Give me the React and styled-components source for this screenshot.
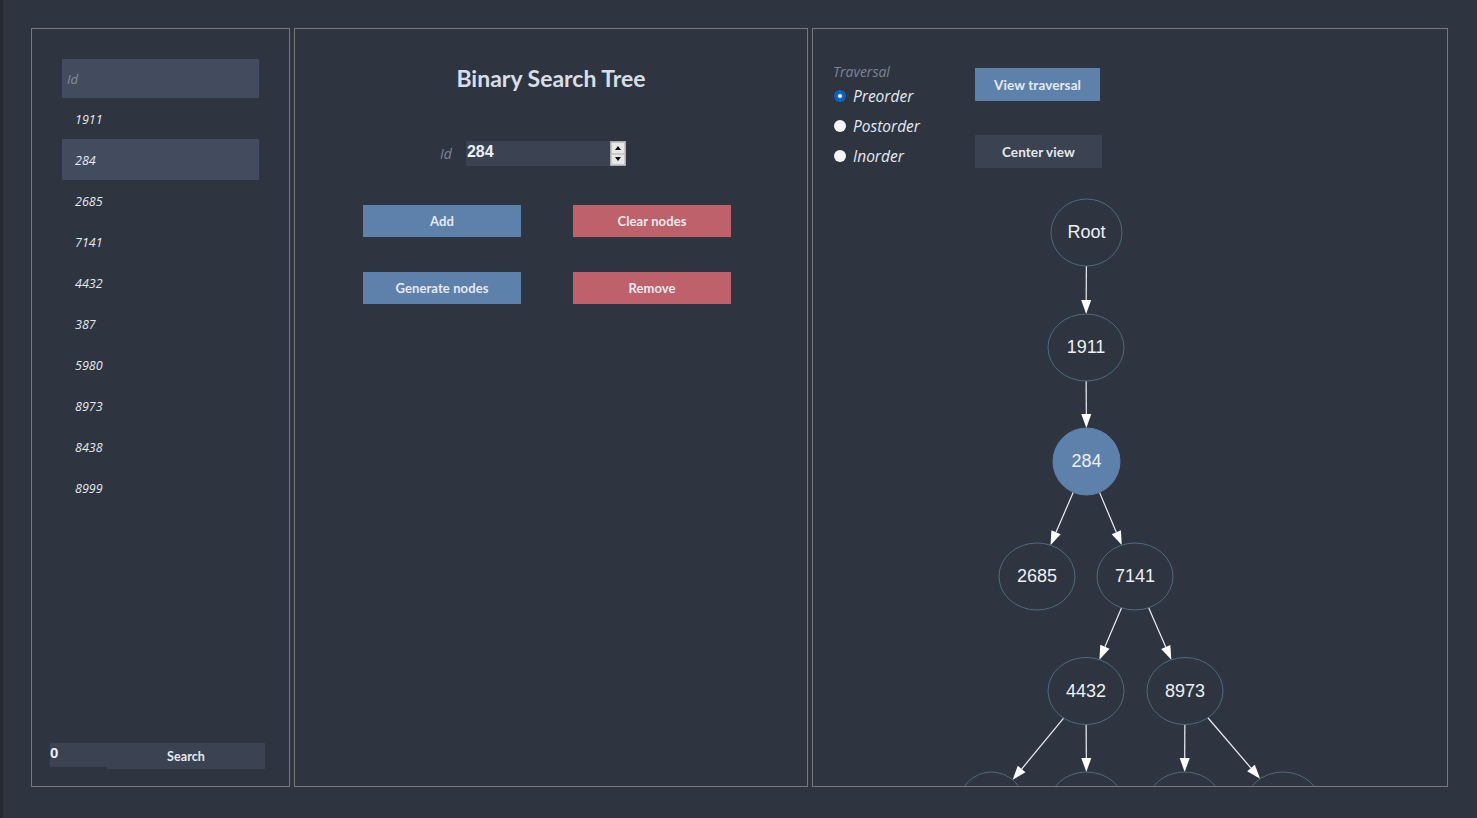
import React from 'react';
import styled, { createGlobalStyle } from 'styled-components';

const GlobalStyle = createGlobalStyle`
  html, body {
    margin: 0;
    padding: 0;
    background: #2e3440;
  }
  * {
    box-sizing: border-box;
  }
`;

const Page = styled.div`
  display: flex;
  gap: 4px;
  height: 100vh;
  padding: 28px 0 0 28px;
  background: #2e3440;
  border-left: 3px solid #262a32;
  font-family: 'Lato', 'Open Sans', sans-serif;
`;

const Panel = styled.section`
  position: relative;
  display: flex;
  flex-direction: column;
  width: ${(p) => p.$w}px;
  height: 759px;
  border: 1px solid #76787b;
  overflow: hidden;
`;

/* ---------- left: node list ---------- */

const ListPanel = styled(Panel)`
  padding: 30px 0 17px 0;
`;

const FilterInput = styled.input`
  margin: 0 30px;
  height: 39px;
  border: none;
  outline: none;
  background: #434c5e;
  padding: 0 5px;
  color: #e5e9f0;
  font: italic 13px 'Open Sans', sans-serif;
  &::placeholder {
    color: #858d9c;
  }
`;

const NodeList = styled.ul`
  list-style: none;
  margin: 0 30px;
  padding: 0;
`;

const NodeItem = styled.li`
  display: flex;
  align-items: center;
  height: 41px;
  padding: 1px 0 0 13px;
  background: ${(p) => (p.$active ? '#434c5e' : 'transparent')};
  color: #e5e9f0;
  font: italic 12.5px 'Open Sans', sans-serif;
`;

const SearchRow = styled.div`
  display: flex;
  align-items: flex-start;
  margin-top: auto;
  margin-left: 18px;
`;

const CountInput = styled.input`
  width: 57px;
  height: 24px;
  border: none;
  outline: none;
  padding: 0 0 6px;
  background: #3b4252;
  color: #eceff4;
  font: bold 15px 'Liberation Sans', Arial, sans-serif;
  line-height: 18px;
`;

const Button = styled.button`
  width: ${(p) => p.$w || 158}px;
  height: ${(p) => p.$h || 32}px;
  border: none;
  padding: 0;
  background: ${(p) =>
    p.$tone === 'blue' ? '#5e81ac' : p.$tone === 'red' ? '#bf616a' : '#3b4252'};
  color: #e5e9f0;
  font: 700 ${(p) => p.$fs || 13}px 'Lato', 'Open Sans', sans-serif;
  letter-spacing: 0.1px;
  cursor: pointer;
`;

/* ---------- middle: editor ---------- */

const EditorPanel = styled(Panel)``;

const Title = styled.h1`
  margin: 37px 0 0;
  text-align: center;
  font: 700 23px/24px 'Lato', 'Open Sans', sans-serif;
  color: #d8dee9;
`;

const IdRow = styled.div`
  display: flex;
  align-items: center;
  gap: 14px;
  margin-top: 51px;
  padding-left: 145px;
`;

const IdLabel = styled.span`
  color: #7d8596;
  font: italic 14px 'Open Sans', sans-serif;
`;

const NumberField = styled.div`
  display: flex;
  height: 25px;
`;

const NumberInput = styled.input`
  width: 144px;
  height: 25px;
  border: none;
  outline: none;
  background: #3b4252;
  color: #eceff4;
  padding: 0 1px 4px;
  font: bold 16px 'Liberation Sans', Arial, sans-serif;
`;

const Spinner = styled.div`
  display: flex;
  flex-direction: column;
  width: 16px;
  height: 25px;
  border: 1px solid #a9a9a9;
  background: #f0f0f0;
`;

const SpinHalf = styled.div`
  flex: 1;
  display: flex;
  align-items: center;
  justify-content: center;
  border: 1px solid #c9c9c9;
  background: #e8e8e8;
  &::after {
    content: '';
    border-left: 3.5px solid transparent;
    border-right: 3.5px solid transparent;
    ${(p) => (p.$up ? 'border-bottom: 4px solid #111;' : 'border-top: 4px solid #111;')}
  }
`;

const ButtonGrid = styled.div`
  display: grid;
  grid-template-columns: 158px 158px;
  column-gap: 52px;
  row-gap: 35px;
  margin-top: 39px;
  padding-left: 68px;
`;

/* ---------- right: traversal + graph ---------- */

const GraphPanel = styled(Panel)``;

const Controls = styled.div`
  position: relative;
  z-index: 1;
  display: flex;
  padding-left: 20px;
`;

const TraversalGroup = styled.div`
  display: flex;
  flex-direction: column;
  width: 142px;
  padding-top: 35px;
`;

const GroupLabel = styled.div`
  height: 17px;
  color: #7d8596;
  font: italic 14px/16px 'Open Sans', sans-serif;
`;

const RadioRow = styled.label`
  display: flex;
  align-items: center;
  gap: 7px;
  height: 30px;
  padding-left: 1px;
  color: #e5e9f0;
  font: italic 15.5px 'Open Sans', sans-serif;
`;

const RadioDot = styled.span`
  width: 12px;
  height: 12px;
  border-radius: 50%;
  background: ${(p) => (p.$checked ? '#0b63c4' : '#f5f5f5')};
  display: flex;
  align-items: center;
  justify-content: center;
  &::after {
    content: '';
    width: 4px;
    height: 4px;
    border-radius: 50%;
    background: ${(p) => (p.$checked ? '#ffffff' : 'transparent')};
  }
`;

const ActionColumn = styled.div`
  display: flex;
  flex-direction: column;
  align-items: flex-start;
  gap: 34px;
  padding-top: 39px;
`;

const Graph = styled.svg`
  position: absolute;
  left: 0;
  top: 0;
`;

// bottom row sits below the visible area, so only its top arcs show
const nodes = {
  root: { x: 1086.5, y: 232.5, rx: 35.5, label: 'Root' },
  a: { x: 1086, y: 347.5, rx: 38, label: '1911' },
  b: { x: 1086.5, y: 461.5, rx: 33.5, label: '284', active: true },
  c: { x: 1037, y: 576.5, rx: 38, label: '2685' },
  d: { x: 1135, y: 576.5, rx: 38, label: '7141' },
  e: { x: 1086, y: 691, rx: 38, label: '4432' },
  f: { x: 1185, y: 691, rx: 38, label: '8973' },
  g: { x: 991.5, y: 805.5, rx: 33 },
  h: { x: 1086.5, y: 805.5, rx: 38 },
  i: { x: 1184.5, y: 805.5, rx: 38 },
  j: { x: 1283, y: 805.5, rx: 38 },
};

const edges = [
  ['root', 'a'],
  ['a', 'b'],
  ['b', 'c'],
  ['b', 'd'],
  ['d', 'e'],
  ['d', 'f'],
  ['e', 'g'],
  ['e', 'h'],
  ['f', 'i'],
  ['f', 'j'],
];

const RY = 33.5;

// point where the line from the centre leaves the ellipse
const rim = (n, dx, dy) => {
  const t = 1 / Math.sqrt((dx / n.rx) ** 2 + (dy / RY) ** 2);
  return [dx * t, dy * t];
};

const Edge = ({ from, to }) => {
  const p = nodes[from];
  const c = nodes[to];
  const dx = c.x - p.x;
  const dy = c.y - p.y;
  const len = Math.hypot(dx, dy);
  const ux = dx / len;
  const uy = dy / len;
  const [sx, sy] = rim(p, dx, dy);
  const [ex, ey] = rim(c, -dx, -dy);
  const tipX = c.x + ex;
  const tipY = c.y + ey;
  const baseX = tipX - ux * 14;
  const baseY = tipY - uy * 14;
  const wx = -uy * 5;
  const wy = ux * 5;
  return (
    <g>
      <line
        x1={p.x + sx}
        y1={p.y + sy}
        x2={baseX}
        y2={baseY}
        stroke="#eceff4"
        strokeWidth="1.2"
      />
      <polygon
        points={`${tipX},${tipY} ${baseX + wx},${baseY + wy} ${baseX - wx},${baseY - wy}`}
        fill="#ffffff"
      />
    </g>
  );
};

const Node = ({ n }) => (
  <g>
    <ellipse
      cx={n.x}
      cy={n.y}
      rx={n.rx}
      ry={RY}
      fill={n.active ? '#5e81ac' : 'none'}
      stroke={n.active ? '#5e81ac' : '#4d6b7f'}
      strokeWidth="1"
    />
    {n.label && (
      <text
        x={n.x}
        y={n.y + 5.5}
        textAnchor="middle"
        fill="#eceff4"
        fontFamily="'Liberation Sans', Arial, sans-serif"
        fontSize="18"
      >
        {n.label}
      </text>
    )}
  </g>
);

const listIds = ['1911', '284', '2685', '7141', '4432', '387', '5980', '8973', '8438', '8999'];

export default function App() {
  return (
    <>
      <GlobalStyle />
      <Page>
        <ListPanel $w={259}>
          <FilterInput placeholder="Id" />
          <NodeList>
            {listIds.map((id) => (
              <NodeItem key={id} $active={id === '284'}>
                {id}
              </NodeItem>
            ))}
          </NodeList>
          <SearchRow>
            <CountInput defaultValue="0" />
            <Button $h={26} $fs={12.5}>Search</Button>
          </SearchRow>
        </ListPanel>

        <EditorPanel $w={514}>
          <Title>Binary Search Tree</Title>
          <IdRow>
            <IdLabel>Id</IdLabel>
            <NumberField>
              <NumberInput defaultValue="284" />
              <Spinner>
                <SpinHalf $up />
                <SpinHalf />
              </Spinner>
            </NumberField>
          </IdRow>
          <ButtonGrid>
            <Button $tone="blue">Add</Button>
            <Button $tone="red">Clear nodes</Button>
            <Button $tone="blue">Generate nodes</Button>
            <Button $tone="red">Remove</Button>
          </ButtonGrid>
        </EditorPanel>

        <GraphPanel $w={636}>
          <Graph width="634" height="757" viewBox="813 29 634 757">
            {edges.map(([f, t]) => (
              <Edge key={f + t} from={f} to={t} />
            ))}
            {Object.entries(nodes).map(([k, n]) => (
              <Node key={k} n={n} />
            ))}
          </Graph>
          <Controls>
            <TraversalGroup>
              <GroupLabel>Traversal</GroupLabel>
              <RadioRow>
                <RadioDot $checked />
                Preorder
              </RadioRow>
              <RadioRow>
                <RadioDot />
                Postorder
              </RadioRow>
              <RadioRow>
                <RadioDot />
                Inorder
              </RadioRow>
            </TraversalGroup>
            <ActionColumn>
              <Button $tone="blue" $w={125} $h={33} $fs={13.5}>
                View traversal
              </Button>
              <Button $w={127} $h={33} $fs={13.5}>
                Center view
              </Button>
            </ActionColumn>
          </Controls>
        </GraphPanel>
      </Page>
    </>
  );
}
